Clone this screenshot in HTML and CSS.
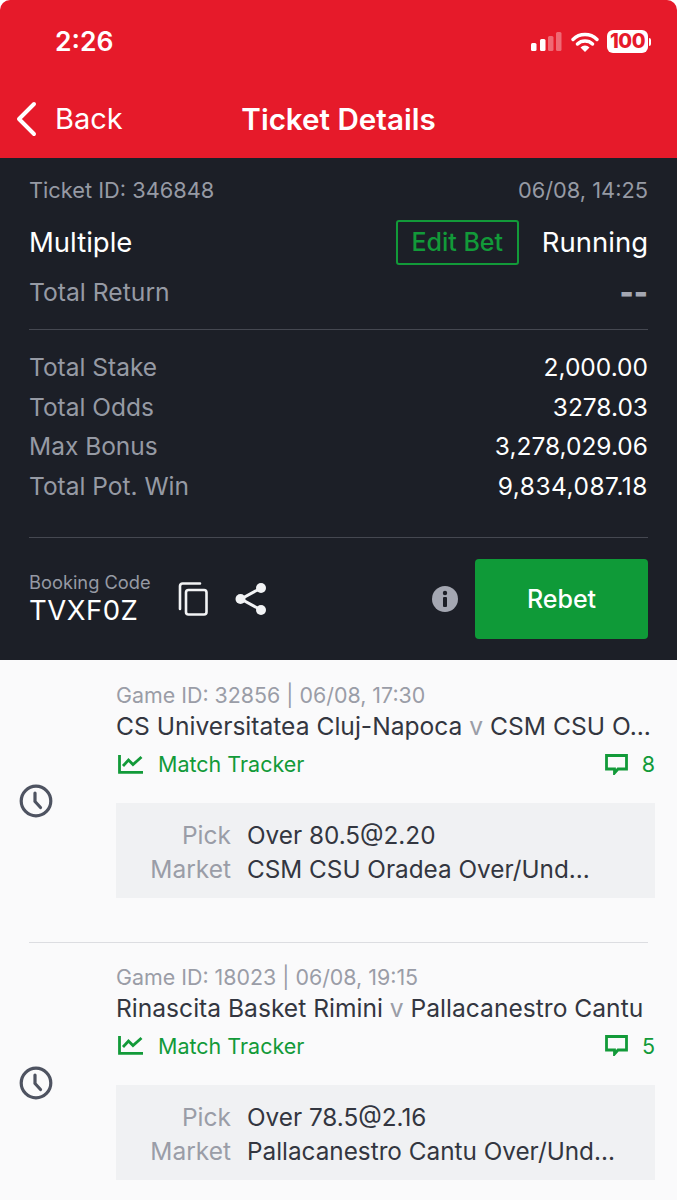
FILE: index.html
```html
<!DOCTYPE html>
<html lang="en">
<head>
<meta charset="utf-8">
<title>Ticket Details</title>
<link rel="stylesheet" href="styles.css">
</head>
<body>
<div class="screen">
  <header class="top">
    <div class="status">
      <span class="time">2:26</span>
      <div class="status-icons">
        <svg class="signal" width="31" height="19" viewBox="0 0 31 19"><rect x="0" y="11" width="5.500" height="8" rx="1.500" fill="#fff"/><rect x="9" y="7" width="5.500" height="12" rx="1.500" fill="#fff"/><rect x="17" y="4" width="5.500" height="15" rx="1.500" fill="#fff" fill-opacity=".35"/><rect x="25" y="0" width="5.500" height="19" rx="1.500" fill="#fff" fill-opacity=".35"/></svg>
        <svg class="wifi" width="28" height="22" viewBox="0 0 28 22"><path d="M2 8.500a17 17 0 0 1 24 0M6.500 13a11 11 0 0 1 15 0" fill="none" stroke="#fff" stroke-width="3.400" stroke-linecap="round"/><path d="M14 21l-4.500-4.600a6.500 6.500 0 0 1 9 0z" fill="#fff"/></svg>
        <div class="battery"><span class="battery-level">100</span><i class="battery-cap"></i></div>
      </div>
    </div>
    <nav class="nav">
      <a class="back">
        <svg width="24" height="36" viewBox="0 0 24 36"><path d="M20 3L5 18l15 15" fill="none" stroke="#fff" stroke-width="4" stroke-linecap="round" stroke-linejoin="round"/></svg>
        <span>Back</span>
      </a>
      <h1 class="title">Ticket Details</h1>
    </nav>
  </header>

  <section class="panel">
    <div class="row meta"><span>Ticket ID: 346848</span><span>06/08, 14:25</span></div>
    <div class="row type-row">
      <span class="type">Multiple</span>
      <div class="type-right"><button class="edit">Edit Bet</button><span class="type">Running</span></div>
    </div>
    <div class="row total-return"><span>Total Return</span><span class="dashes">--</span></div>
    <div class="figures">
      <div class="row figure"><span>Total Stake</span><b>2,000.00</b></div>
      <div class="row figure"><span>Total Odds</span><b>3278.03</b></div>
      <div class="row figure"><span>Max Bonus</span><b>3,278,029.06</b></div>
      <div class="row figure"><span>Total Pot. Win</span><b class="spaced">9,834,087.18</b></div>
    </div>
    <div class="actions">
      <div class="booking"><span class="booking-label">Booking Code</span><span class="booking-code">TVXF0Z</span></div>
      <svg class="copy" width="30" height="34" viewBox="0 0 30 34"><path d="M2 27V4a2.500 2.500 0 0 1 2.500-2.500H22" fill="none" stroke="#f2f3f5" stroke-width="2.600" stroke-linecap="round"/><rect x="8" y="8" width="20.500" height="24.500" rx="2.500" fill="none" stroke="#f2f3f5" stroke-width="2.600"/></svg>
      <svg class="share" width="32" height="34" viewBox="0 0 32 34"><path d="M26 6L6 17l20 11" fill="none" stroke="#f2f3f5" stroke-width="3"/><circle cx="26" cy="6" r="5" fill="#f2f3f5"/><circle cx="5.500" cy="17" r="5" fill="#f2f3f5"/><circle cx="26" cy="28" r="5" fill="#f2f3f5"/></svg>
      <svg class="info" width="26" height="26" viewBox="0 0 26 26"><circle cx="13" cy="13" r="13" fill="#a4a7b2"/><circle cx="13" cy="7" r="2.200" fill="#1c1f27"/><rect x="11" y="11" width="4" height="10" rx="1" fill="#1c1f27"/></svg>
      <button class="rebet">Rebet</button>
    </div>
  </section>

  <section class="list">
    <article class="game">
      <svg class="clock" width="34" height="34" viewBox="0 0 34 34"><circle cx="17" cy="17" r="14.800" fill="none" stroke="#4e5361" stroke-width="3.200"/><path d="M16 9v8.500l5.500 6" fill="none" stroke="#4e5361" stroke-width="3.200" stroke-linecap="round"/></svg>
      <div class="game-body">
        <div class="game-id">Game ID: 32856 | 06/08, 17:30</div>
        <div class="teams"><span>CS Universitatea Cluj-Napoca</span> <i>v</i> <span>CSM CSU O...</span></div>
        <div class="links">
          <a class="tracker"><svg width="25" height="19" viewBox="0 0 25 19"><path d="M1.500 0v17.300H25" fill="none" stroke="#129a39" stroke-width="2.800"/><path d="M5 11l5.500-6 4.500 4.500L23.500 2" fill="none" stroke="#129a39" stroke-width="2.800"/></svg><span>Match Tracker</span></a>
          <a class="comments"><svg width="23" height="21" viewBox="0 0 23 21"><path d="M1.500 1.500h20v13.500H13l-3.500 4v-4h-8z" fill="none" stroke="#129a39" stroke-width="2.800"/></svg><span>8</span></a>
        </div>
        <div class="pick">
          <div class="pick-row"><span class="pick-label">Pick</span><span class="pick-value">Over 80.5@2.20</span></div>
          <div class="pick-row"><span class="pick-label">Market</span><span class="pick-value">CSM CSU Oradea Over/Und...</span></div>
        </div>
      </div>
    </article>
    <article class="game divided">
      <svg class="clock" width="34" height="34" viewBox="0 0 34 34"><circle cx="17" cy="17" r="14.800" fill="none" stroke="#4e5361" stroke-width="3.200"/><path d="M16 9v8.500l5.500 6" fill="none" stroke="#4e5361" stroke-width="3.200" stroke-linecap="round"/></svg>
      <div class="game-body">
        <div class="game-id">Game ID: 18023 | 06/08, 19:15</div>
        <div class="teams"><span>Rinascita Basket Rimini</span> <i>v</i> <span>Pallacanestro Cantu</span></div>
        <div class="links">
          <a class="tracker"><svg width="25" height="19" viewBox="0 0 25 19"><path d="M1.500 0v17.300H25" fill="none" stroke="#129a39" stroke-width="2.800"/><path d="M5 11l5.500-6 4.500 4.500L23.500 2" fill="none" stroke="#129a39" stroke-width="2.800"/></svg><span>Match Tracker</span></a>
          <a class="comments"><svg width="23" height="21" viewBox="0 0 23 21"><path d="M1.500 1.500h20v13.500H13l-3.500 4v-4h-8z" fill="none" stroke="#129a39" stroke-width="2.800"/></svg><span>5</span></a>
        </div>
        <div class="pick">
          <div class="pick-row"><span class="pick-label">Pick</span><span class="pick-value">Over 78.5@2.16</span></div>
          <div class="pick-row"><span class="pick-label">Market</span><span class="pick-value">Pallacanestro Cantu Over/Und...</span></div>
        </div>
      </div>
    </article>
  </section>
</div>
</body>
</html>
```
FILE: styles.css
```css
* { box-sizing: border-box; }
html, body { margin: 0; padding: 0; background: #fff; }
body { font-family: Inter, "Liberation Sans", sans-serif; }
.screen { width: 677px; height: 1200px; overflow: hidden; background: #fafafb; border-radius: 10px 10px 0 0; }

.top { height: 158px; background: #e61a2a; color: #fff; }
.status { height: 82px; padding: 25px 26px 0 55px; display: flex; justify-content: space-between; align-items: flex-start; }
.time { font-size: 26.500px; line-height: 33px; font-weight: 600; }
.status-icons { display: flex; align-items: center; gap: 8px; padding-top: 5px; }
.signal { margin-right: 1px; }
.battery { display: flex; align-items: center; gap: 1px; }
.battery-level { width: 41px; height: 23px; border-radius: 6px; background: #fff; color: #e61a2a; font-size: 20px; line-height: 23px; font-weight: 800; text-align: center; letter-spacing: -.5px; }
.battery-cap { width: 2px; height: 8px; background: #fff; border-radius: 0 2px 2px 0; }

.nav { position: relative; height: 76px; padding-bottom: 2px; display: flex; align-items: center; justify-content: center; }
.back { position: absolute; left: 14px; top: 19px; display: flex; align-items: center; gap: 17px; font-size: 29px; line-height: 36px; }
.title { margin: 0; font-size: 29.600px; line-height: 36px; font-weight: 600; }

.panel { height: 502px; background: #1c1f27; padding: 17px 29px 0 29px; color: #fff; }
.row { display: flex; justify-content: space-between; align-items: center; }
.meta { font-size: 21.800px; line-height: 30px; color: #969aa4; }
.type-row { margin-top: 14px; height: 46px; }
.type { font-size: 27.500px; line-height: 36px; }
.type-right { display: flex; align-items: center; gap: 23px; }
.edit { width: 123px; height: 45px; padding: 0; background: transparent; border: 2px solid #129a39; border-radius: 3px; color: #129a39; font: inherit; font-size: 25px; font-weight: 500; }
.total-return { margin-top: 10px; height: 34px; font-size: 24.700px; color: #969aa4; }
.dashes { font-size: 30px; font-weight: 900; color: #a4a7b2; }
.figures { margin-top: 20px; padding: 17px 0 31px; border-top: 1px solid #454851; border-bottom: 1px solid #454851; }
.figure { height: 39.700px; font-size: 24.500px; color: #969aa4; }
.figure b { color: #fff; font-weight: 400; }
.figure b.spaced { letter-spacing: .5px; }
.actions { margin-top: 21px; display: flex; align-items: center; height: 80px; }
.booking { display: flex; flex-direction: column; width: 148px; }
.booking-label { font-size: 18.300px; line-height: 22px; color: #969aa4; }
.booking-code { font-size: 27.500px; line-height: 34px; color: #fff; letter-spacing: .5px; }
.copy { margin-left: 1px; }
.share { margin-left: 27px; }
.info { margin-left: auto; }
.rebet { margin-left: 17px; width: 173px; height: 80px; border: 0; border-radius: 4px; background: #0f9a38; color: #fff; font: inherit; font-size: 25px; font-weight: 500; }

.list { padding: 0 22px 0 19px; }
.game { display: flex; height: 281.500px; padding-top: 22px; }
.divided { position: relative; }
.divided::before { content: ""; position: absolute; top: 0; left: 10px; right: 7px; height: 1px; background: #dcdde1; }
.clock { flex: none; margin-top: 102px; }
.game-body { margin-left: 63px; flex: 1; min-width: 0; }
.game-id { font-size: 21.400px; line-height: 26px; color: #9a9da7; }
.teams { margin-top: 1px; font-size: 24.600px; line-height: 34px; color: #333640; white-space: nowrap; }
.teams i { font-style: normal; color: #9a9da7; }
.links { margin-top: 4px; padding-left: 2px; display: flex; justify-content: space-between; align-items: center; height: 34px; font-size: 21.500px; color: #129a39; }
.tracker { display: flex; align-items: center; gap: 15px; }
.comments { display: flex; align-items: center; gap: 14px; }
.pick { margin-top: 22px; height: 95px; background: #f0f1f3; padding: 15px 0 0; }
.pick-row { display: flex; height: 34px; align-items: center; font-size: 24.300px; }
.pick-row .pick-label { font-size: 24.500px; }
.pick-label { width: 115px; text-align: right; color: #9a9da7; }
.pick-value { margin-left: 16px; color: #333640; white-space: nowrap; }
```
